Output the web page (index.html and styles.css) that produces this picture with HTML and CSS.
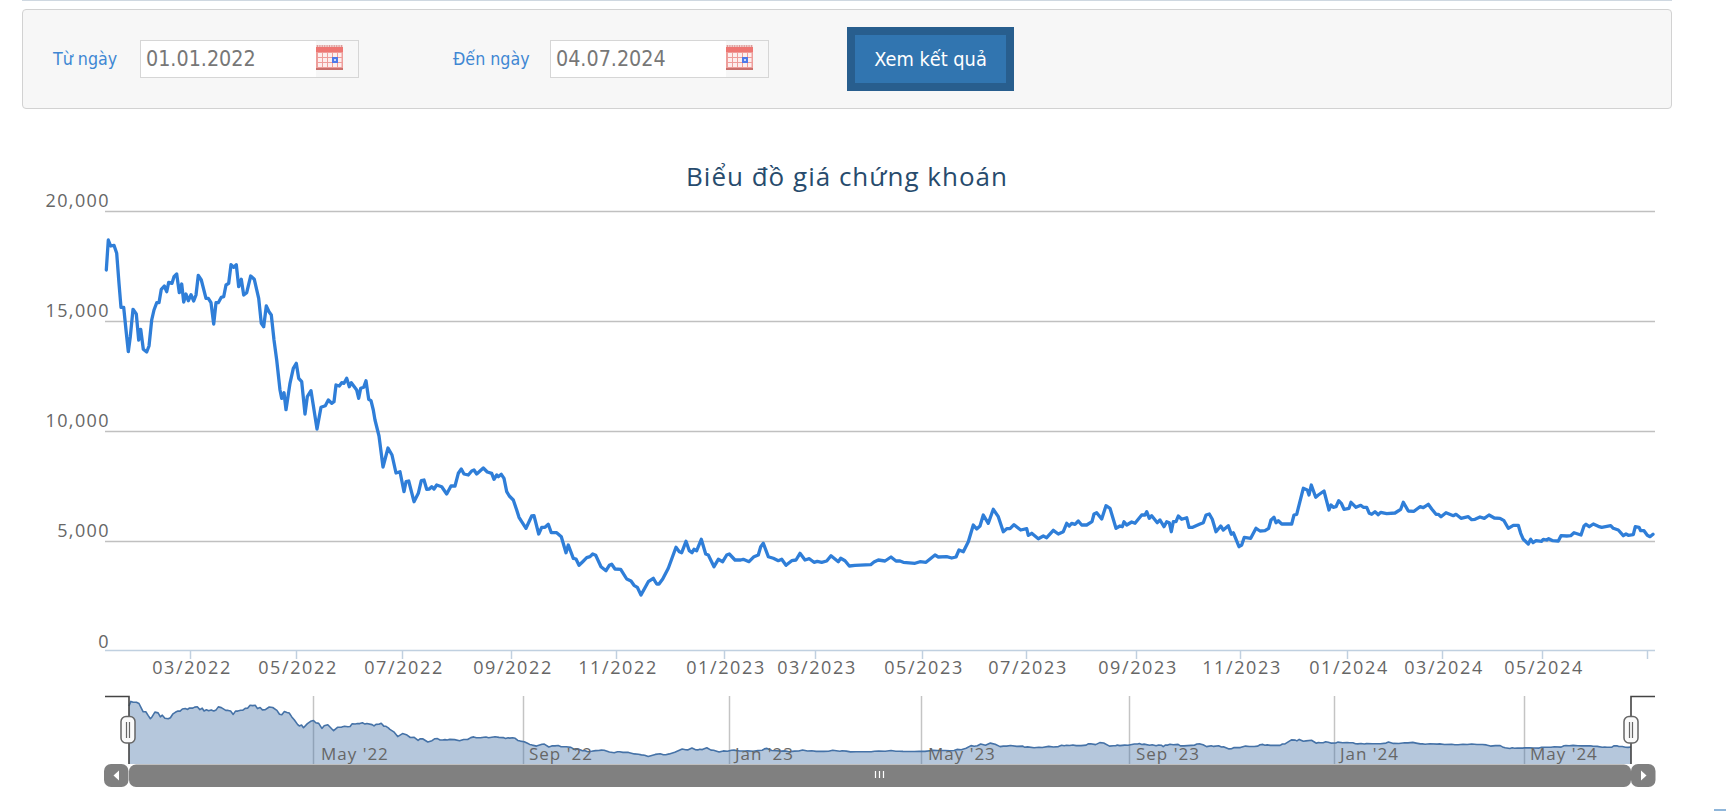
FILE: index.html
```html
<!DOCTYPE html>
<html lang="vi">
<head>
<meta charset="utf-8">
<title>Biểu đồ giá chứng khoán</title>
<link rel="stylesheet" href="styles.css">
</head>
<body>
<svg class="defs" width="0" height="0" aria-hidden="true">
  <symbol id="cal" viewBox="0 0 27 25">
    <rect width="27" height="25" fill="#ee9d9a"/>
    <rect y="0" width="27" height="2" fill="#f4d0ce"/>
    <path d="M1 1H26" stroke="#b86a66" stroke-width="1" stroke-dasharray="1 1.4"/>
    <rect y="2" width="27" height="5" fill="#ee7672"/>
    <g fill="#fdeeed">
      <rect x="2" y="8" width="4" height="4"/><rect x="7" y="8" width="4" height="4"/><rect x="12" y="8" width="4" height="4"/><rect x="17" y="8" width="4" height="4"/><rect x="22" y="8" width="3.5" height="4"/>
      <rect x="2" y="13" width="4" height="4"/><rect x="7" y="13" width="4" height="4"/><rect x="12" y="13" width="4" height="4"/><rect x="22" y="13" width="3.5" height="4"/>
      <rect x="2" y="18" width="4" height="4"/><rect x="7" y="18" width="4" height="4"/><rect x="12" y="18" width="4" height="4"/><rect x="17" y="18" width="4" height="4"/><rect x="22" y="18" width="3.5" height="4"/>
    </g>
    <rect x="16" y="12" width="6" height="6" fill="#4f79e8"/>
    <rect x="18" y="14" width="2" height="2" fill="#c8d6f8"/>
    <rect y="23" width="27" height="2" fill="#c9706c"/>
  </symbol>
</svg>
<div class="topline"></div>
<form class="panel">
  <label class="label label-from">Từ ngày</label>
  <div class="date">
    <span class="date-value">01.01.2022</span>
    <span class="date-btn"><svg class="cal-icon"><use href="#cal"/></svg></span>
  </div>
  <label class="label label-to">Đến ngày</label>
  <div class="date">
    <span class="date-value">04.07.2024</span>
    <span class="date-btn"><svg class="cal-icon"><use href="#cal"/></svg></span>
  </div>
  <button class="submit" type="button">Xem kết quả</button>
</form>
<svg class="chart" viewBox="0 109 1726 702" width="1726" height="702">
  <text class="title" x="847" y="186">Biểu đồ giá chứng khoán</text>
  <g class="grid">
    <line x1="105" x2="1655" y1="211.5" y2="211.5"/>
    <line x1="105" x2="1655" y1="321.5" y2="321.5"/>
    <line x1="105" x2="1655" y1="431.5" y2="431.5"/>
    <line x1="105" x2="1655" y1="541.5" y2="541.5"/>
  </g>
  <g class="ylabels">
    <text x="110" y="207">20,000</text>
    <text x="110" y="317">15,000</text>
    <text x="110" y="427">10,000</text>
    <text x="110" y="537">5,000</text>
    <text x="110" y="648">0</text>
  </g>
  <g class="axis">
    <line x1="105" x2="1655" y1="650.5" y2="650.5"/>
    <line x1="190.5" x2="190.5" y1="651" y2="659"/>
    <line x1="296.5" x2="296.5" y1="651" y2="659"/>
    <line x1="402.5" x2="402.5" y1="651" y2="659"/>
    <line x1="511.5" x2="511.5" y1="651" y2="659"/>
    <line x1="616.5" x2="616.5" y1="651" y2="659"/>
    <line x1="724.5" x2="724.5" y1="651" y2="659"/>
    <line x1="815.5" x2="815.5" y1="651" y2="659"/>
    <line x1="922.5" x2="922.5" y1="651" y2="659"/>
    <line x1="1026.5" x2="1026.5" y1="651" y2="659"/>
    <line x1="1136.5" x2="1136.5" y1="651" y2="659"/>
    <line x1="1240.5" x2="1240.5" y1="651" y2="659"/>
    <line x1="1347.5" x2="1347.5" y1="651" y2="659"/>
    <line x1="1442.5" x2="1442.5" y1="651" y2="659"/>
    <line x1="1542.5" x2="1542.5" y1="651" y2="659"/>
    <line x1="1647.5" x2="1647.5" y1="651" y2="659"/>
  </g>
  <g class="xlabels">
    <text x="192" y="674">03/2022</text>
    <text x="298" y="674">05/2022</text>
    <text x="404" y="674">07/2022</text>
    <text x="513" y="674">09/2022</text>
    <text x="618" y="674">11/2022</text>
    <text x="726" y="674">01/2023</text>
    <text x="817" y="674">03/2023</text>
    <text x="924" y="674">05/2023</text>
    <text x="1028" y="674">07/2023</text>
    <text x="1138" y="674">09/2023</text>
    <text x="1242" y="674">11/2023</text>
    <text x="1349" y="674">01/2024</text>
    <text x="1444" y="674">03/2024</text>
    <text x="1544" y="674">05/2024</text>
  </g>
  <polyline id="price-line" class="price"/>

  <g class="nav-grid">
    <line x1="313.5" x2="313.5" y1="696" y2="764"/>
    <line x1="523.5" x2="523.5" y1="696" y2="764"/>
    <line x1="729.5" x2="729.5" y1="696" y2="764"/>
    <line x1="921.5" x2="921.5" y1="696" y2="764"/>
    <line x1="1129.5" x2="1129.5" y1="696" y2="764"/>
    <line x1="1334.5" x2="1334.5" y1="696" y2="764"/>
    <line x1="1524.5" x2="1524.5" y1="696" y2="764"/>
  </g>
  <polygon id="nav-area" class="nav-area"/>
  <polyline id="nav-line" class="nav-line"/>
  <g class="nav-labels">
    <text x="321" y="760">May '22</text>
    <text x="529" y="760">Sep '22</text>
    <text x="735" y="760">Jan '23</text>
    <text x="928" y="760">May '23</text>
    <text x="1136" y="760">Sep '23</text>
    <text x="1340" y="760">Jan '24</text>
    <text x="1530" y="760">May '24</text>
  </g>
  <path class="nav-mask" d="M105 696.5H129V764M1655 696.5H1631V764"/>
  <g class="handle">
    <rect x="121" y="716.5" width="14" height="26.5" rx="5"/>
    <path d="M126.5 722V738M129.5 722V738"/>
  </g>
  <g class="handle">
    <rect x="1624" y="716.5" width="14" height="26.5" rx="5"/>
    <path d="M1629.5 722V738M1632.5 722V738"/>
  </g>
  <rect class="scroll-track" x="104" y="764" width="1551" height="23"/>
  <rect class="scroll-btn" x="104" y="764" width="24.5" height="23" rx="7"/>
  <rect class="scroll-btn" x="1631" y="764" width="24.5" height="23" rx="7"/>
  <rect class="scroll-thumb" x="129" y="764.5" width="1502" height="22.5" rx="7"/>
  <path class="scroll-arrow" d="M119 770.5V780.5L113.5 775.5Z"/>
  <path class="scroll-arrow" d="M1641 770.5V780.5L1646.5 775.5Z"/>
  <path class="scroll-grip" d="M875.5 771V778M879.5 771V778M883.5 771V778"/>
</svg>
<div class="corner-mark"></div>
<script src="chart.js"></script>
</body>
</html>
```
FILE: styles.css
```css
html, body { margin: 0; padding: 0; background: #fff; overflow: hidden; }
body { height: 811px; position: relative; font-family: "DejaVu Sans", sans-serif; }
.defs { position: absolute; }
.topline { height: 1px; margin: 0 54px 0 22px; background: #cfd8e1; }
.panel {
  box-sizing: border-box; height: 100px; margin: 8px 54px 0 22px;
  display: flex; align-items: center; padding-left: 30px;
  background: #f7f7f7; border: 1px solid #d2d2d2; border-radius: 4px;
}
.label { color: #3f87d3; font-size: 17.7px; font-stretch: condensed; white-space: nowrap; }
.label-from { width: 87px; }
.label-to { width: 97px; margin-left: 94px; }
.date {
  box-sizing: border-box; width: 219px; height: 38px; display: flex;
  border: 1px solid #d6d6d6;
}
.date-value {
  box-sizing: border-box; width: 175px; background: #fff; color: #777;
  padding-left: 5px; font-size: 21.3px; line-height: 36px; font-stretch: condensed;
}
.date-btn { display: block; padding-top: 4px; }
.cal-icon { width: 27px; height: 25px; display: block; }
.submit {
  box-sizing: border-box; width: 167px; height: 64px; margin-left: 78px; padding: 0;
  background: #3175b0; border: 8px solid #285e8e; color: #fff;
  font-family: inherit; font-size: 19.8px; font-stretch: condensed;
}
.chart { display: block; }
.title { text-anchor: middle; fill: #274b6d; font-family: "Open Sans", sans-serif; font-size: 26px; letter-spacing: 1px; }
.grid line { stroke: #c0c0c0; stroke-width: 1.4; }
.ylabels text { text-anchor: end; fill: #666; font-family: "Open Sans", sans-serif; font-size: 18px; letter-spacing: 1.4px; }
.xlabels text { text-anchor: middle; fill: #666; font-family: "Open Sans", sans-serif; font-size: 18px; letter-spacing: 1.6px; }
.axis line { stroke: #c0d0e0; stroke-width: 1.5; }
.price { fill: none; stroke: #2f7ed8; stroke-width: 3.3; stroke-linejoin: round; stroke-linecap: round; }
.nav-grid line { stroke: #c4c4c4; stroke-width: 1.5; }
.nav-area { fill: rgba(69, 114, 167, 0.4); }
.nav-line { fill: none; stroke: #4572a7; stroke-width: 1.6; stroke-linejoin: round; }
.nav-labels text { fill: #666; font-family: "Open Sans", sans-serif; font-size: 17px; letter-spacing: 1px; }
.nav-mask { fill: none; stroke: #444; stroke-width: 1.6; }
.handle rect { fill: #fafafa; stroke: #666; stroke-width: 1.5; }
.handle path { fill: none; stroke: #666; stroke-width: 1.2; }
.scroll-track { fill: #fff; }
.scroll-btn, .scroll-thumb { fill: #808080; }
.scroll-arrow { fill: #fff; }
.scroll-grip { fill: none; stroke: #fff; stroke-width: 1.2; }
.corner-mark { position: absolute; right: 0; bottom: 0; width: 12px; height: 2px; background: #8fb6da; }
```
FILE: chart.js
```js
// Price series, read as [originX, originY, x, y, x, y, ...] at 3 units per pixel.
var SEGMENTS = [
  [20, 170, 259,300,265,210,272,228,282,226,290,250,297,340,303,412,311,412,318,480,325,545,331,500,339,418,349,432,356,510,362,478,370,538,380,546,387,528,395,450,402,420,410,398,417,398,424,358,433,348,440,365,446,337,456,340,462,320,470,312,478,368,485,342,491,396,498,372,505,392,513,374,521,393,528,375,535,316,544,330,558,385,565,385,573,398,581,462,588,398,595,398,604,382,611,380,618,345,626,340,633,284,641,292,649,284,656,350,664,328,671,375,680,368,692,318,703,328,716,385,724,460,731,470,739,408,747,425,754,435,762,510,770,570,780,660,785,685,792,668,798,719,810,640,820,595,829,580,836,625,845,635,855,732,862,680,873,662,891,777,903,712,916,707,925,690,935,700,942,695,948,645,958,648,965,638,972,640,980,625,988,650,994,638,1010,660,1016,685,1022,655,1031,652,1038,632,1046,688,1053,692,1060,720,1065,750,1077,798,1089,891,1104,834,1116,855,1128,909],
  [400, 380, 0,275,12,335,18,305,26,303,42,365,55,340,64,302,72,300,80,328,88,327,95,320,102,327,110,315,125,320,140,342,153,318,165,318,175,280,184,267,192,282,205,285,215,273,222,270,230,282,250,264,262,276,275,280,282,298,290,285,295,290,304,283,312,295,320,335,328,348,340,360,350,390,357,412,365,425,378,445,395,408,402,407,416,462,425,442,435,442,445,433,454,458,470,458,484,470,498,518,505,495,520,535,528,537,537,556,548,545,560,533,570,530,578,522,587,526,603,560,618,572,628,556,635,553,645,567,662,568,680,597,693,603,702,616,712,622,723,645,745,605,760,595,770,612,777,612,788,597,805,565,828,502,838,515,845,518,858,484,868,512,876,518,882,508,890,512,904,478,917,522,925,525,942,560,955,538,968,545,980,525,988,522,1005,540,1022,540,1030,538,1047,545,1062,530,1075,525,1082,500,1090,490,1105,530,1120,535,1135,542,1145,538,1158,556,1175,542,1188,540],
  [800, 420, 0,400,15,420,28,416,42,427,52,424,65,427,80,423,93,407,115,425,122,415,135,422,148,438,165,436,212,434,222,426,235,420,255,423,273,411,288,423,300,423,310,427,345,430,360,425,378,427,405,405,415,411,440,410,455,414,468,411,477,390,490,395,505,365,520,315,530,327,540,318,550,285,565,310,580,268,595,290,610,335,620,326,630,326,642,314,662,330,680,326,685,346,695,340,715,356,730,348,740,353,760,331,775,342,790,335,800,310,808,318,815,310,825,313,835,303,845,315,860,315,876,305,882,282,890,278,905,297,918,257,930,265,948,325,960,318,967,320,972,305,980,315,995,306,1005,310,1025,285,1035,285,1040,275,1048,295,1055,287,1072,308,1080,300,1092,320,1100,305,1108,308,1114,335,1120,305,1128,305,1135,288,1145,298,1160,293,1167,322,1178,322],
  [1150, 420, 150,312,160,308,168,285,178,282,187,298,198,335,212,318,220,330,235,317,244,343,250,338,267,380,275,375,283,352,302,355,318,325,330,333,345,332,356,325,363,300,372,292,378,308,385,302,395,312,425,312,432,285,440,283,460,205,472,210,477,225,484,195,497,232,505,225,522,213,537,270,543,255,550,262,558,260,566,242,574,250,582,268,597,265,603,247,618,262,632,256,640,262,650,262,658,280,665,283,675,275,685,284,692,277,710,281,735,279,752,268,760,247,775,273,792,274,810,260,820,263,835,253,845,267,858,283,865,283,873,290,888,278,910,287,918,283,933,295,955,290,965,299,975,298,990,291,1003,295,1017,285,1033,294],
  [1500, 500, 0,55,12,62,25,85,40,76,55,76,62,100,70,118,85,132,92,118,99,128,108,122,125,124,130,118,140,120,146,116,158,122,175,123,183,107,200,108,212,107,222,98,243,105,252,78,258,73,268,80,280,72,295,79,305,82,332,77,340,85,355,90,370,107,378,102,385,106,400,104,406,80,417,82,422,92,432,92,442,106,450,110,459,103]
];

var points = [];
SEGMENTS.forEach(function (seg) {
  for (var i = 2; i < seg.length; i += 2) {
    points.push([seg[0] + seg[i] / 3, seg[1] + seg[i + 1] / 3]);
  }
});

function toAttr(list) {
  return list.map(function (p) { return p[0].toFixed(1) + ',' + p[1].toFixed(1); }).join(' ');
}

var x0 = points[0][0];
var x1 = points[points.length - 1][0];
var navPoints = points.map(function (p) {
  return [129 + (p[0] - x0) * 1502 / (x1 - x0), 701.4 + (p[1] - 240) * 0.155];
});

document.getElementById('price-line').setAttribute('points', toAttr(points));
document.getElementById('nav-line').setAttribute('points', toAttr(navPoints));
document.getElementById('nav-area').setAttribute('points',
  toAttr(navPoints.concat([[1631, 764], [129, 764]])));
```
